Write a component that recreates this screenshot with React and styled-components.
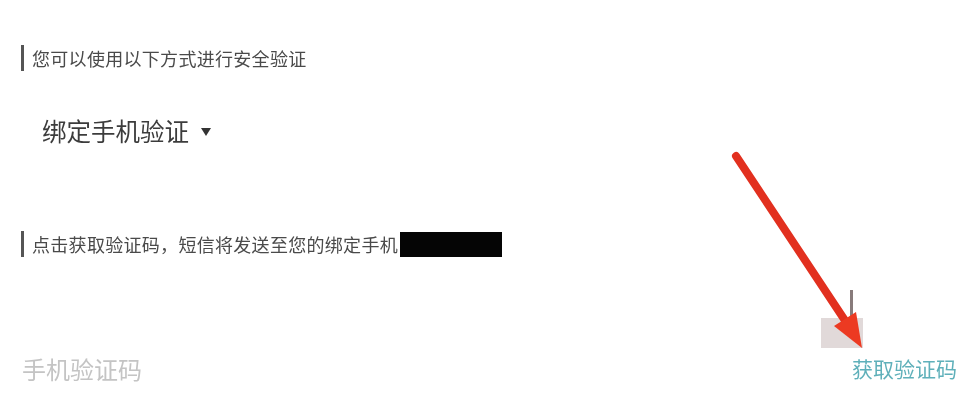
import React from "react";
import styled, { createGlobalStyle } from "styled-components";

const Global = createGlobalStyle`
  html, body { margin: 0; padding: 0; background: #fff; }
  body { font-family: "Noto Sans CJK SC", "Noto Sans", sans-serif; }
  #root { width: 966px; height: 411px; overflow: hidden; }
`;

const Page = styled.div`
  position: relative;
  width: 966px;
  height: 411px;
  box-sizing: border-box;
  padding: 42px 9px 0 21px;
  display: flex;
  flex-direction: column;
  background: #fff;
  filter: blur(0.45px);
`;

const Heading = styled.div`
  display: flex;
  align-items: center;
  height: 26px;
  margin-top: ${(p) => p.$mt || 0}px;
  border-left: 3px solid #555;
  padding-left: 8px;
  font-size: 18px;
  color: #4a4a4a;
  line-height: 26px;
  letter-spacing: 0.3px;
`;

const Masked = styled.span`
  display: inline-block;
  width: 102px;
  height: 25px;
  background: #050505;
  margin-left: 2px;
`;

const Selector = styled.div`
  display: flex;
  align-items: center;
  gap: 12px;
  margin-top: 41px;
  padding-left: 21px;
  height: 36px;
  font-size: 24.5px;
  color: #3c3c3c;
`;

const Caret = styled.span`
  width: 0;
  height: 0;
  border-left: 5px solid transparent;
  border-right: 5px solid transparent;
  border-top: 8px solid #333;
  margin-top: 4px;
`;

const InputRow = styled.div`
  display: flex;
  align-items: center;
  justify-content: space-between;
  margin-top: 91px;
  height: 40px;
`;

const Placeholder = styled.span`
  font-size: 24px;
  color: #c4c4c4;
  margin-left: 1px;
`;

const SendCode = styled.span`
  font-size: 21px;
  color: #5fb0ba;
`;

const Overlay = styled.svg`
  position: absolute;
  left: 0;
  top: 0;
  width: 966px;
  height: 411px;
  pointer-events: none;
`;

export default function App() {
  return (
    <>
      <Global />
      <Page>
        <Heading $mt={3}>您可以使用以下方式进行安全验证</Heading>
        <Selector>
          绑定手机验证
          <Caret />
        </Selector>
        <Heading $mt={83}>
          点击获取验证码，短信将发送至您的绑定手机
          <Masked />
        </Heading>
        <InputRow>
          <Placeholder>手机验证码</Placeholder>
          <SendCode>获取验证码</SendCode>
        </InputRow>
        <Overlay viewBox="0 0 966 411">
          <rect x="821" y="318" width="42" height="30" fill="#d9cfcf" opacity="0.8" />
          <rect x="850" y="290" width="3" height="28" fill="#6a5a5a" opacity="0.8" />
          <line x1="736" y1="156" x2="846" y2="322" stroke="#e2301f" strokeWidth="8" strokeLinecap="round" />
          <polygon points="862,348 834,326 856,312" fill="#ec3a22" />
        </Overlay>
      </Page>
    </>
  );
}
